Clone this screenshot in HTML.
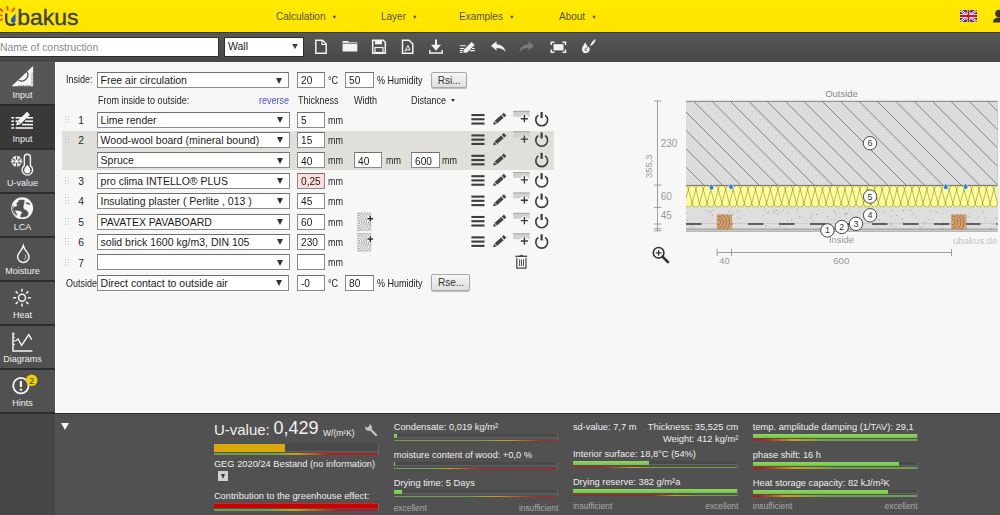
<!DOCTYPE html>
<html><head><meta charset="utf-8">
<style>
*{box-sizing:border-box;margin:0;padding:0}
html,body{width:1000px;height:515px;overflow:hidden;background:#f7f7f7;font-family:"Liberation Sans",sans-serif;color:#333}
.a{position:absolute}
#hdr{left:0;top:0;width:1000px;height:32px;background:linear-gradient(#ffea00,#ffe400)}
#tb{left:0;top:32px;width:1000px;height:29.8px;background:linear-gradient(#575757,#474747);border-top:1px solid #3a3a3a}
.menu{top:11px;font-size:10px;color:#5a5230}
.menu i{font-style:normal;font-size:5.5px;margin-left:6px;position:relative;top:-1.5px}
#side{left:0;top:62px;width:55px;height:352px;background:#4a4a4a}
.tab{left:0;width:55px;height:44px;border-bottom:1px solid #2f2f2f;background:#4b4b4b}
.tab span{position:absolute;left:0;width:55px;text-align:center;font-size:10px;color:#eee;top:30px}
#bot{left:0;top:413px;width:1000px;height:102px;background:#515151;border-top:1px solid #2e2e2e}
.sel{background:#fff;border:1px solid #8d8d8d;height:16px;font-size:10.5px;line-height:14px;padding-left:3px;color:#222;white-space:nowrap;overflow:hidden}
.sel:after{content:"";position:absolute;right:6px;top:5px;border-left:3px solid transparent;border-right:3px solid transparent;border-top:6px solid #333}
.inp{background:#fff;border:1px solid #8d8d8d;height:16px;font-size:10.5px;line-height:14px;padding-left:3px;color:#222}
.lbl{font-size:9px;color:#333;white-space:nowrap}
.bt{font-size:9.3px;color:#eee;white-space:nowrap}
.selb{background:#fff;border:1px solid #8a8a8a;border-top-color:#6f6f6f;height:16px}
.inpb{border:1px solid #8a8a8a;border-top-color:#6f6f6f;height:16px}
.tri{width:0;height:0;border-left:3.5px solid transparent;border-right:3.5px solid transparent;border-top:6px solid #333}
.btn{border:1px solid #a8a8a8;border-radius:2px;background:linear-gradient(#f6f6f6,#dedede);box-shadow:0 1px 1px rgba(0,0,0,.25)}
.grip{width:5px;height:8px;background-image:linear-gradient(90deg,#b8b8b8 1.4px,transparent 1.4px);background-size:2.9px 2.9px;-webkit-mask-image:linear-gradient(#000 1.4px,transparent 1.4px);-webkit-mask-size:2.9px 2.9px}
</style></head><body>
<div id="hdr" class="a"></div>
<div class="a menu" style="left:276px">Calculation<i>▼</i></div>
<div class="a menu" style="left:381px">Layer<i>▼</i></div>
<div class="a menu" style="left:459px">Examples<i>▼</i></div>
<div class="a menu" style="left:559px">About<i>▼</i></div>


<svg class="a" style="left:0;top:0" width="90" height="32" viewBox="0 0 90 32">
 <g stroke="#e5531c" stroke-width="1.9" stroke-linecap="round">
  <line x1="7.3" y1="6.6" x2="7.6" y2="9.8"/>
  <line x1="14.2" y1="8.4" x2="12.2" y2="11.2"/>
  <line x1="0.3" y1="8.9" x2="2.6" y2="11.2"/>
  <line x1="-0.5" y1="15.4" x2="1.8" y2="15.4"/>
  <line x1="-0.5" y1="20.5" x2="1.9" y2="19.3"/>
 </g>
 <path d="M6.2 13.2 V19.8 C6.2 23.3, 8.4 24.9, 11.2 24.9 C12.9 24.9, 14.3 24.4, 15.2 23.6" fill="none" stroke="#3c404d" stroke-width="2.3"/>
 <path d="M15.6 13.4 C14.2 15.6, 11 17.4, 11 20 A2.25 2.25 0 0 0 15.4 21.2 C15.9 19.2, 15.3 16, 15.6 13.4 Z" fill="#1763cf"/>
 <text x="17.3" y="25" font-family="Liberation Sans" font-size="22" fill="#3c404d" stroke="#3c404d" stroke-width="0.35" textLength="61.3" lengthAdjust="spacingAndGlyphs">bakus</text>
</svg>
<svg class="a" style="left:960px;top:10px" width="17" height="12" viewBox="0 0 60 40" preserveAspectRatio="none">
 <rect width="60" height="40" fill="#1d3a8a"/>
 <path d="M0,0 L60,40 M60,0 L0,40" stroke="#fff" stroke-width="8"/>
 <path d="M0,0 L60,40 M60,0 L0,40" stroke="#d0102a" stroke-width="3"/>
 <path d="M30,0 V40 M0,20 H60" stroke="#fff" stroke-width="12"/>
 <path d="M30,0 V40 M0,20 H60" stroke="#d0102a" stroke-width="7"/>
</svg>
<svg class="a" style="left:993px;top:9px" width="7" height="14" viewBox="0 0 7 14">
 <circle cx="6" cy="4.5" r="3.8" fill="#3b3520"/>
 <path d="M0 13.5 C0 9.5, 3 8.5, 6 8.5 L7 8.5 L7 13.5Z" fill="#3b3520"/>
</svg>
<div id="tb" class="a"></div>

<div class="a" style="left:-5px;top:36.8px;width:224px;height:20px;background:#fff;border:1px solid #2e2e2e;border-top-color:#333"></div>
<div class="a" style="left:0;top:41.8px;font-size:10.4px;color:#8a8a8a;white-space:nowrap">Name of construction</div>
<div class="a" style="left:224px;top:36.8px;width:80px;height:20px;background:#fff;border:1px solid #2e2e2e"></div>
<div class="a" style="left:228px;top:40.3px;font-size:10.5px;color:#222">Wall</div>
<div class="a" style="left:292px;top:44px;width:0;height:0;border-left:3.2px solid transparent;border-right:3.2px solid transparent;border-top:5.6px solid #444"></div>
<svg class="a" style="left:300px;top:36px" width="310" height="22" viewBox="300 36 310 22" fill="none" stroke="#f2f2f2">
 <!-- new doc -->
 <path d="M315.8 40.3 H322.5 L326.2 44 V53.2 H315.8 Z" stroke-width="1.5"/>
 <path d="M322 40.5 V44.5 H326" stroke-width="1.2"/>
 <!-- folder -->
 <path d="M342.6 41 H348 L349.3 42.3 H357.3 V51.4 H342.6 Z" fill="#f2f2f2" stroke="none"/>
 <path d="M342.6 43.3 H357.3" stroke="#4f4f4f" stroke-width="0.8"/>
 <!-- save -->
 <path d="M372.7 40.3 H383.3 L385.3 42.3 V53.2 H372.7 Z" stroke-width="1.5"/>
 <rect x="375" y="40.5" width="7" height="3.8" fill="#f2f2f2" stroke="none"/>
 <rect x="375" y="47.5" width="8" height="5" stroke-width="1.2"/>
 <!-- pdf -->
 <path d="M402.5 40.3 H409 L412.8 44 V53.2 H402.5 Z" stroke-width="1.5"/>
 <path d="M405 51 L408 45.5 L410 50 Q407 49 405 51" stroke-width="1"/>
 <!-- download -->
 <path d="M436 39.5 V49" stroke-width="2"/>
 <path d="M431.5 45 L436 50.5 L440.5 45 Z" fill="#f2f2f2" stroke-width="0.5"/>
 <path d="M429.8 50 V53 H442.2 V50" stroke-width="1.5"/>
 <!-- edit lines -->
 <path d="M459.9 45.8 H466 M459.9 48.5 H464.3 M459.9 50.6 H463.3 M459.9 52.5 H462 M472 48.5 H474.8 M470 50.6 H474.9" stroke="#f2f2f2" stroke-width="1.1" fill="none"/>
 <path d="M463.3 52.8 L464.2 49.4 L471.6 42 L474.6 45 L467.2 52.4 Z" fill="#f2f2f2" stroke="none"/>
 <!-- undo -->
 <path d="M491 45.8 L496.5 41.3 V44.2 C501 44.2, 504.5 47, 505.7 51.7 C503 49, 500 48, 496.5 48 V50.6 Z" fill="#f2f2f2" stroke="none"/>
 <!-- redo -->
 <path d="M534 45.8 L528.5 41.3 V44.2 C524 44.2, 520.5 47, 519.5 51.7 C522 49, 525 48, 528.5 48 V50.6 Z" fill="#7b7b7b" stroke="none"/>
 <!-- fullscreen -->
 <path d="M551.3 45 V42.3 H554.5 M562.5 42.3 H565.5 V45 M565.5 49.5 V52.3 H562.5 M554.5 52.3 H551.3 V49.5" stroke-width="1.5"/>
 <rect x="553.5" y="44.2" width="10" height="6.2" fill="#f2f2f2" stroke="none"/>
 <!-- brush -->
 <path d="M595.8 39 Q591.2 41 590.2 46.3 Q595 44 595.8 39 Z" fill="#f2f2f2" stroke="none"/>
 <path d="M585.4 42.3 C584.3 44.3, 582 46.2, 582 49.6 C582 52, 583.8 53.2, 585.8 53.2 C588 53.2, 589.6 51.6, 589.8 49.3 C589.8 47.8, 589 47, 588.2 46.8 C587 45.8, 586 44.5, 585.4 42.3 Z" fill="#f2f2f2" stroke="none"/>
 <path d="M587.6 47.2 L584.8 49.6 L587 51" stroke="#4f4f4f" stroke-width="1" fill="none"/>
</svg>
<div id="side" class="a"></div>
<div class="a" style="left:55px;top:62px;width:1px;height:351px;background:#fff"></div>
<div class="a" style="left:0;top:61.5px;width:55px;height:44px;background:#565656;border-bottom:2px solid #2c2c2c"></div>
<div class="a" style="left:0;top:90.0px;width:45px;text-align:center;font-size:9px;color:#f0f0f0">Input</div>
<div class="a" style="left:0;top:105.5px;width:55px;height:44px;background:#393939;border-bottom:2px solid #2c2c2c"></div>
<div class="a" style="left:0;top:134.0px;width:45px;text-align:center;font-size:9px;color:#f0f0f0">Input</div>
<div class="a" style="left:0;top:149.5px;width:55px;height:44px;background:#515151;border-bottom:2px solid #2c2c2c"></div>
<div class="a" style="left:0;top:178.0px;width:45px;text-align:center;font-size:9px;color:#f0f0f0">U-value</div>
<div class="a" style="left:0;top:193.5px;width:55px;height:44px;background:#515151;border-bottom:2px solid #2c2c2c"></div>
<div class="a" style="left:0;top:222.0px;width:45px;text-align:center;font-size:9px;color:#f0f0f0">LCA</div>
<div class="a" style="left:0;top:237.5px;width:55px;height:44px;background:#515151;border-bottom:2px solid #2c2c2c"></div>
<div class="a" style="left:0;top:266.0px;width:45px;text-align:center;font-size:9px;color:#f0f0f0">Moisture</div>
<div class="a" style="left:0;top:281.5px;width:55px;height:44px;background:#515151;border-bottom:2px solid #2c2c2c"></div>
<div class="a" style="left:0;top:310.0px;width:45px;text-align:center;font-size:9px;color:#f0f0f0">Heat</div>
<div class="a" style="left:0;top:325.5px;width:55px;height:44px;background:#515151;border-bottom:2px solid #2c2c2c"></div>
<div class="a" style="left:0;top:354.0px;width:45px;text-align:center;font-size:9px;color:#f0f0f0">Diagrams</div>
<div class="a" style="left:0;top:369.5px;width:55px;height:44px;background:#515151;border-bottom:2px solid #2c2c2c"></div>
<div class="a" style="left:0;top:398.0px;width:45px;text-align:center;font-size:9px;color:#f0f0f0">Hints</div>

<svg class="a" style="left:0;top:62px" width="55" height="352" viewBox="0 62 55 352">
 <!-- set square -->
 <path d="M11.5 86.3 L33.1 66 V86.3 Z" fill="#f4f4f4"/>
 <path d="M18.4 80 A6.2 6.2 0 0 0 27.1 71.8" stroke="#575757" stroke-width="1.3" fill="none"/>
 <path d="M19.1 85.1 V86.5 M21.2 85.1 V86.5 M23.4 85.1 V86.5 M25.6 85.1 V86.5 M27.7 85.1 V86.5 M29.9 85.1 V86.5 M31.4 73.6 H32.6 M31.4 75.7 H32.6 M31.4 77.8 H32.6 M31.4 79.9 H32.6 M31.4 82 H32.6 M31.4 84 H32.6" stroke="#575757" stroke-width="0.8"/>
 <!-- input form -->
 <g fill="#f4f4f4">
  <rect x="11.4" y="117" width="2.6" height="1.6"/><rect x="15.5" y="117" width="7" height="1.6"/><rect x="27" y="117" width="6" height="1.6"/>
  <rect x="11.4" y="120.4" width="2.6" height="1.6"/><rect x="15.5" y="120.4" width="2.5" height="1.6"/><rect x="25" y="120.4" width="8" height="1.6"/>
  <rect x="11.4" y="123.8" width="2.6" height="1.6"/><rect x="22" y="123.8" width="11" height="1.6"/>
  <rect x="11.4" y="127.2" width="2.6" height="1.6"/><rect x="15.5" y="127.2" width="17.5" height="1.6"/>
  <path d="M16 125.5 L17.3 121.2 L27 111.8 L30 114.8 L20.3 124.2 Z"/>
 </g>
 <path d="M18.3 121.6 L19.9 123.2" stroke="#3a3a3a" stroke-width="0.9"/>
 <!-- thermometer -->
 <path d="M24.3 157.3 A3.05 3.05 0 0 1 30.4 157.3 V165.6 A5.25 5.25 0 1 1 24.3 165.6 Z" fill="none" stroke="#f4f4f4" stroke-width="1.4"/>
 <path d="M27.3 164.6 C26.8 166.5, 24.2 167.6, 24.2 170.2 A3.1 3.1 0 0 0 30.4 170.2 C30.4 167.6, 27.8 166.5, 27.3 164.6 Z" fill="#f4f4f4"/>
 <path d="M16.60 161.20 L22.00 161.20 M19.57 161.20 L21.27 159.50 M19.57 161.20 L21.27 162.90 M16.60 161.20 L19.30 165.88 M18.09 163.77 L20.40 164.39 M18.09 163.77 L17.46 166.09 M16.60 161.20 L13.90 165.88 M15.12 163.77 L15.74 166.09 M15.12 163.77 L12.80 164.39 M16.60 161.20 L11.20 161.20 M13.63 161.20 L11.93 162.90 M13.63 161.20 L11.93 159.50 M16.60 161.20 L13.90 156.52 M15.12 158.63 L12.80 158.01 M15.12 158.63 L15.74 156.31 M16.60 161.20 L19.30 156.52 M18.09 158.63 L17.46 156.31 M18.09 158.63 L20.40 158.01 " stroke="#f4f4f4" stroke-width="1.1" stroke-linecap="round" fill="none"/>
 <!-- globe -->
 <circle cx="22.2" cy="208.2" r="10.9" fill="#f4f4f4"/>
 <path d="M18.85 200.30 L24.15 200.05 L24.15 201.57 L23.65 205.10 L22.89 207.12 L24.15 209.65 L26.17 210.15 L27.69 212.17 L28.19 214.19 L26.68 216.21 L21.63 217.22 L20.62 216.72 L21.12 214.19 L22.64 212.68 L20.11 210.66 L16.58 210.15 L14.56 210.15 L15.57 212.17 L17.08 215.20 L15.06 213.18 L13.29 210.15 L13.55 207.63 L16.07 206.62 L17.59 205.61 L16.58 203.59 L18.60 202.07 Z" fill="#515151" stroke="#515151" stroke-width="0.6" stroke-linejoin="round"/>
 <path d="M25.16 202.58 L28.19 202.58 L30.72 204.34 L29.20 204.85 L26.68 204.09 Z" fill="#515151"/>
 <path d="M13.2 205.5 A9.4 9.4 0 0 0 16 215.5" fill="none" stroke="#515151" stroke-width="0.9"/>
 <!-- drop -->
 <path d="M23.3 245.8 C22 250.5, 17.6 253, 17.6 256.7 A5.7 5.7 0 0 0 29 256.7 C29 253, 24.6 250.5, 23.3 245.8 Z" fill="none" stroke="#f4f4f4" stroke-width="1.5"/>
 <path d="M25 254.5 C26.3 256.5, 26 258.5, 24 259.8" fill="none" stroke="#f4f4f4" stroke-width="0.7"/>
 <!-- sun -->
 <circle cx="22" cy="297.7" r="3.5" fill="none" stroke="#f4f4f4" stroke-width="1.5"/>
 <g stroke="#f4f4f4" stroke-width="1.5">
  <path d="M22 288.8 V291.8 M22 303.6 V306.6 M13.1 297.7 H16.1 M27.9 297.7 H30.9 M15.7 291.4 L17.8 293.5 M26.2 301.9 L28.3 304 M28.3 291.4 L26.2 293.5 M17.8 301.9 L15.7 304"/>
 </g>
 <!-- chart -->
 <path d="M13 332.5 V350.9 H32.4" fill="none" stroke="#f4f4f4" stroke-width="1.5"/>
 <path d="M13 334 H15 M13 337.5 H15 M13 341 H15 M13 344.6 H15" stroke="#f4f4f4" stroke-width="0.9"/>
 <path d="M15.2 341 L18 339 L21.6 345.4 L28.8 334.6 L31.7 339.6" fill="none" stroke="#f4f4f4" stroke-width="1.4"/>
 <!-- hints -->
 <circle cx="20.9" cy="385.6" r="7.7" fill="none" stroke="#f4f4f4" stroke-width="1.8"/>
 <path d="M20.9 381 V387" stroke="#f4f4f4" stroke-width="2.2"/>
 <circle cx="20.9" cy="389.6" r="1.2" fill="#f4f4f4"/>
 <circle cx="31.7" cy="380.3" r="5.8" fill="#f2cf00"/>
 <text x="31.7" y="383.7" font-family="Liberation Sans" font-size="9" fill="#3a3a3a" text-anchor="middle">2</text>
</svg>

<!--FORM-->
<div class="a" style="left:61.5px;top:130.8px;width:492.5px;height:39px;background:#e0dfd9"></div>
<div class="a" style="left:65.6px;top:74.42px;font-size:10.2px;color:#1e1e1e;white-space:nowrap;transform:scaleX(0.885);transform-origin:0 0;">Inside:</div>
<div class="a selb" style="left:97.3px;top:72.20px;width:191.5px"></div>
<div class="a" style="left:100.6px;top:74.24px;font-size:10.5px;color:#1a1a1a;white-space:nowrap;transform:scaleX(1.0);transform-origin:0 0;">Free air circulation</div>
<div class="a tri" style="left:276.3px;top:77.50px"></div>
<div class="a inpb" style="left:297px;top:72.20px;width:28px;background:#fff"></div>
<div class="a" style="left:300.6px;top:74.48px;font-size:11px;color:#1a1a1a;white-space:nowrap;transform:scaleX(0.92);transform-origin:0 0;">20</div>
<div class="a" style="left:328px;top:74.62px;font-size:10.2px;color:#1e1e1e;white-space:nowrap;transform:scaleX(0.885);transform-origin:0 0;">°C</div>
<div class="a inpb" style="left:345.3px;top:72.20px;width:28.7px;background:#fff"></div>
<div class="a" style="left:348.90000000000003px;top:74.48px;font-size:11px;color:#1a1a1a;white-space:nowrap;transform:scaleX(0.92);transform-origin:0 0;">50</div>
<div class="a" style="left:377.2px;top:74.62px;font-size:10.2px;color:#1e1e1e;white-space:nowrap;transform:scaleX(0.885);transform-origin:0 0;">% Humidity</div>
<div class="a btn" style="left:431.3px;top:72.2px;width:35.4px;height:15.9px"></div>
<div class="a" style="left:437.7px;top:74.70px;font-size:10px;color:#333;white-space:nowrap;">Rsi...</div>
<div class="a" style="left:97.5px;top:94.62px;font-size:10.2px;color:#1e1e1e;white-space:nowrap;transform:scaleX(0.885);transform-origin:0 0;">From inside to outside:</div>
<div class="a" style="left:259.2px;top:94.62px;font-size:10.2px;color:#4b50d8;white-space:nowrap;transform:scaleX(0.885);transform-origin:0 0;">reverse</div>
<div class="a" style="left:297.8px;top:94.62px;font-size:10.2px;color:#1e1e1e;white-space:nowrap;transform:scaleX(0.885);transform-origin:0 0;">Thickness</div>
<div class="a" style="left:354px;top:94.62px;font-size:10.2px;color:#1e1e1e;white-space:nowrap;transform:scaleX(0.885);transform-origin:0 0;">Width</div>
<div class="a" style="left:411.3px;top:94.62px;font-size:10.2px;color:#1e1e1e;white-space:nowrap;transform:scaleX(0.885);transform-origin:0 0;">Distance</div>
<div class="a" style="left:451.4px;top:99px;width:0;height:0;border-left:2px solid transparent;border-right:2px solid transparent;border-top:3px solid #333"></div>
<div class="a grip" style="left:65px;top:115.90px"></div>
<div class="a" style="left:78.2px;top:114.82px;font-size:10.3px;color:#2a2a2a;white-space:nowrap;">1</div>
<div class="a selb" style="left:97.3px;top:111.60px;width:192.3px"></div>
<div class="a" style="left:100.6px;top:113.64px;font-size:10.5px;color:#1a1a1a;white-space:nowrap;transform:scaleX(1.0);transform-origin:0 0;">Lime render</div>
<div class="a tri" style="left:277.1px;top:116.90px"></div>
<div class="a inpb" style="left:297px;top:111.60px;width:28px;background:#fff"></div>
<div class="a" style="left:300.6px;top:113.88px;font-size:11px;color:#1a1a1a;white-space:nowrap;transform:scaleX(0.92);transform-origin:0 0;">5</div>
<div class="a" style="left:328px;top:114.62px;font-size:10.2px;color:#1e1e1e;white-space:nowrap;transform:scaleX(0.885);transform-origin:0 0;">mm</div>
<div class="a grip" style="left:65px;top:136.29px"></div>
<div class="a" style="left:78.2px;top:135.21px;font-size:10.3px;color:#2a2a2a;white-space:nowrap;">2</div>
<div class="a selb" style="left:97.3px;top:131.99px;width:192.3px"></div>
<div class="a" style="left:100.6px;top:134.03px;font-size:10.5px;color:#1a1a1a;white-space:nowrap;transform:scaleX(1.0);transform-origin:0 0;">Wood-wool board (mineral bound)</div>
<div class="a tri" style="left:277.1px;top:137.29px"></div>
<div class="a inpb" style="left:297px;top:131.99px;width:28px;background:#fff"></div>
<div class="a" style="left:300.6px;top:134.27px;font-size:11px;color:#1a1a1a;white-space:nowrap;transform:scaleX(0.92);transform-origin:0 0;">15</div>
<div class="a" style="left:328px;top:135.01px;font-size:10.2px;color:#1e1e1e;white-space:nowrap;transform:scaleX(0.885);transform-origin:0 0;">mm</div>
<div class="a selb" style="left:97.3px;top:152.38px;width:192.3px"></div>
<div class="a" style="left:100.6px;top:154.42px;font-size:10.5px;color:#1a1a1a;white-space:nowrap;transform:scaleX(1.0);transform-origin:0 0;">Spruce</div>
<div class="a tri" style="left:277.1px;top:157.68px"></div>
<div class="a inpb" style="left:297px;top:152.38px;width:28px;background:#fff"></div>
<div class="a" style="left:300.6px;top:154.66px;font-size:11px;color:#1a1a1a;white-space:nowrap;transform:scaleX(0.92);transform-origin:0 0;">40</div>
<div class="a" style="left:328px;top:155.40px;font-size:10.2px;color:#1e1e1e;white-space:nowrap;transform:scaleX(0.885);transform-origin:0 0;">mm</div>
<div class="a inpb" style="left:354px;top:152.38px;width:28px;background:#fff"></div>
<div class="a" style="left:357.6px;top:154.66px;font-size:11px;color:#1a1a1a;white-space:nowrap;transform:scaleX(0.92);transform-origin:0 0;">40</div>
<div class="a" style="left:385.5px;top:155.40px;font-size:10.2px;color:#1e1e1e;white-space:nowrap;transform:scaleX(0.885);transform-origin:0 0;">mm</div>
<div class="a inpb" style="left:411px;top:152.38px;width:28.5px;background:#fff"></div>
<div class="a" style="left:414.6px;top:154.66px;font-size:11px;color:#1a1a1a;white-space:nowrap;transform:scaleX(0.92);transform-origin:0 0;">600</div>
<div class="a" style="left:442px;top:155.40px;font-size:10.2px;color:#1e1e1e;white-space:nowrap;transform:scaleX(0.885);transform-origin:0 0;">mm</div>
<div class="a grip" style="left:65px;top:177.07px"></div>
<div class="a" style="left:78.2px;top:175.99px;font-size:10.3px;color:#2a2a2a;white-space:nowrap;">3</div>
<div class="a selb" style="left:97.3px;top:172.77px;width:192.3px"></div>
<div class="a" style="left:100.6px;top:174.81px;font-size:10.5px;color:#1a1a1a;white-space:nowrap;transform:scaleX(1.0);transform-origin:0 0;">pro clima INTELLO® PLUS</div>
<div class="a tri" style="left:277.1px;top:178.07px"></div>
<div class="a inpb" style="left:297px;top:172.77px;width:28px;background:#ffdede"></div>
<div class="a" style="left:300.6px;top:175.05px;font-size:11px;color:#1a1a1a;white-space:nowrap;transform:scaleX(0.92);transform-origin:0 0;">0,25</div>
<div class="a" style="left:328px;top:175.79px;font-size:10.2px;color:#1e1e1e;white-space:nowrap;transform:scaleX(0.885);transform-origin:0 0;">mm</div>
<div class="a grip" style="left:65px;top:197.46px"></div>
<div class="a" style="left:78.2px;top:196.38px;font-size:10.3px;color:#2a2a2a;white-space:nowrap;">4</div>
<div class="a selb" style="left:97.3px;top:193.16px;width:192.3px"></div>
<div class="a" style="left:100.6px;top:195.20px;font-size:10.5px;color:#1a1a1a;white-space:nowrap;transform:scaleX(1.0);transform-origin:0 0;">Insulating plaster ( Perlite , 013 )</div>
<div class="a tri" style="left:277.1px;top:198.46px"></div>
<div class="a inpb" style="left:297px;top:193.16px;width:28px;background:#fff"></div>
<div class="a" style="left:300.6px;top:195.44px;font-size:11px;color:#1a1a1a;white-space:nowrap;transform:scaleX(0.92);transform-origin:0 0;">45</div>
<div class="a" style="left:328px;top:196.18px;font-size:10.2px;color:#1e1e1e;white-space:nowrap;transform:scaleX(0.885);transform-origin:0 0;">mm</div>
<div class="a grip" style="left:65px;top:217.85px"></div>
<div class="a" style="left:78.2px;top:216.77px;font-size:10.3px;color:#2a2a2a;white-space:nowrap;">5</div>
<div class="a selb" style="left:97.3px;top:213.55px;width:192.3px"></div>
<div class="a" style="left:100.6px;top:215.59px;font-size:10.5px;color:#1a1a1a;white-space:nowrap;transform:scaleX(1.0);transform-origin:0 0;">PAVATEX PAVABOARD</div>
<div class="a tri" style="left:277.1px;top:218.85px"></div>
<div class="a inpb" style="left:297px;top:213.55px;width:28px;background:#fff"></div>
<div class="a" style="left:300.6px;top:215.83px;font-size:11px;color:#1a1a1a;white-space:nowrap;transform:scaleX(0.92);transform-origin:0 0;">60</div>
<div class="a" style="left:328px;top:216.57px;font-size:10.2px;color:#1e1e1e;white-space:nowrap;transform:scaleX(0.885);transform-origin:0 0;">mm</div>
<div class="a grip" style="left:65px;top:238.24px"></div>
<div class="a" style="left:78.2px;top:237.16px;font-size:10.3px;color:#2a2a2a;white-space:nowrap;">6</div>
<div class="a selb" style="left:97.3px;top:233.94px;width:192.3px"></div>
<div class="a" style="left:100.6px;top:235.98px;font-size:10.5px;color:#1a1a1a;white-space:nowrap;transform:scaleX(1.0);transform-origin:0 0;">solid brick 1600 kg/m3, DIN 105</div>
<div class="a tri" style="left:277.1px;top:239.24px"></div>
<div class="a inpb" style="left:297px;top:233.94px;width:28px;background:#fff"></div>
<div class="a" style="left:300.6px;top:236.22px;font-size:11px;color:#1a1a1a;white-space:nowrap;transform:scaleX(0.92);transform-origin:0 0;">230</div>
<div class="a" style="left:328px;top:236.96px;font-size:10.2px;color:#1e1e1e;white-space:nowrap;transform:scaleX(0.885);transform-origin:0 0;">mm</div>
<div class="a grip" style="left:65px;top:258.63px"></div>
<div class="a" style="left:78.2px;top:257.55px;font-size:10.3px;color:#2a2a2a;white-space:nowrap;">7</div>
<div class="a selb" style="left:97.3px;top:254.33px;width:192.3px"></div>
<div class="a" style="left:100.6px;top:256.37px;font-size:10.5px;color:#1a1a1a;white-space:nowrap;transform:scaleX(1.0);transform-origin:0 0;"></div>
<div class="a tri" style="left:277.1px;top:259.63px"></div>
<div class="a inpb" style="left:297px;top:254.33px;width:28px;background:#fff"></div>
<div class="a" style="left:328px;top:257.35px;font-size:10.2px;color:#1e1e1e;white-space:nowrap;transform:scaleX(0.885);transform-origin:0 0;">mm</div>
<div class="a" style="left:65.7px;top:277.54px;font-size:10.2px;color:#1e1e1e;white-space:nowrap;transform:scaleX(0.885);transform-origin:0 0;">Outside</div>
<div class="a selb" style="left:97.3px;top:274.72px;width:191.5px"></div>
<div class="a" style="left:100.6px;top:276.76px;font-size:10.5px;color:#1a1a1a;white-space:nowrap;transform:scaleX(1.0);transform-origin:0 0;">Direct contact to outside air</div>
<div class="a tri" style="left:276.3px;top:280.02px"></div>
<div class="a inpb" style="left:297px;top:274.72px;width:28px;background:#fff"></div>
<div class="a" style="left:300.6px;top:277.00px;font-size:11px;color:#1a1a1a;white-space:nowrap;transform:scaleX(0.92);transform-origin:0 0;">-0</div>
<div class="a" style="left:328px;top:277.74px;font-size:10.2px;color:#1e1e1e;white-space:nowrap;transform:scaleX(0.885);transform-origin:0 0;">°C</div>
<div class="a inpb" style="left:345.3px;top:274.72px;width:28.7px;background:#fff"></div>
<div class="a" style="left:348.90000000000003px;top:277.00px;font-size:11px;color:#1a1a1a;white-space:nowrap;transform:scaleX(0.92);transform-origin:0 0;">80</div>
<div class="a" style="left:377.2px;top:277.94px;font-size:10.2px;color:#1e1e1e;white-space:nowrap;transform:scaleX(0.885);transform-origin:0 0;">% Humidity</div>
<div class="a btn" style="left:431.3px;top:274.32px;width:38.4px;height:17px"></div>
<div class="a" style="left:438px;top:277.42px;font-size:10px;color:#333;white-space:nowrap;">Rse...</div>
<svg class="a" style="left:0;top:0" width="1000" height="515" viewBox="0 0 1000 515">
<defs>
 <g id="ham" fill="#3d3d3d"><rect x="471.4" y="2.4" width="13.1" height="2.1"/><rect x="471.4" y="6.6" width="13.1" height="2.1"/><rect x="471.4" y="10.9" width="13.1" height="2.1"/></g>
 <g id="pen"><path d="M493.00 13.20 L494.16 9.69 L496.62 12.46 Z" fill="#444"/><path d="M495.91 10.61 L502.41 4.83 M503.08 4.24 L505.10 2.44" stroke="#444" stroke-width="3.7"/></g>
 <mask id="pm" maskUnits="userSpaceOnUse" x="505" y="-5" width="30" height="20"><rect x="505" y="-5" width="30" height="20" fill="#fff"/><circle cx="524.4" cy="7.2" r="4.4" fill="#000"/></mask>
 <g id="plus"><g mask="url(#pm)"><rect x="513.1" y="-0.7" width="16.5" height="5.9" fill="#d0d0d0"/><rect x="513.1" y="-0.7" width="16.5" height="1" fill="#a8a8a8"/></g><path d="M524.4 3.4 V10.7 M520.8 7.1 H527.9" stroke="#3a3a3a" stroke-width="1.4"/></g>
 <g id="pwr" fill="none" stroke="#3a3a3a" stroke-width="1.6"><path d="M538.3 3.5 A5.9 5.9 0 1 0 545.1 3.5"/><path d="M541.6 0.4 V6.5" stroke-width="2.2"/></g>
  <clipPath id="tc"><rect x="357.5" y="-0.6" width="13.4" height="17.8"/></clipPath>
 <g id="tex"><rect x="357.5" y="-0.6" width="13.4" height="17.8" fill="#f2f2f2" stroke="#c4c4c4" stroke-width="0.6"/><g clip-path="url(#tc)"><path d="M357.6 6.1 A2.2 2.2 0 0 1 357.6 10.5 M357.6 3.9 A4.4 4.4 0 0 1 357.6 12.7 M357.6 1.7 A6.6 6.6 0 0 1 357.6 14.9 M357.6 -0.5 A8.8 8.8 0 0 1 357.6 17.1 M357.6 -2.7 A11 11 0 0 1 357.6 19.3 M357.6 -4.9 A13.2 13.2 0 0 1 357.6 21.5 M357.6 -7.1 A15.4 15.4 0 0 1 357.6 23.7 " fill="none" stroke="#8c8c8c" stroke-width="0.75"/></g><circle cx="370.3" cy="5.1" r="3.2" fill="#f7f7f7"/><path d="M370.3 2.3 V8 M367.5 5.1 H373.1" stroke="#333" stroke-width="1.5"/></g>
 <g id="trash"><rect x="515.4" y="1.3" width="11.7" height="1.3" fill="#3a3a3a"/><path d="M519.4 1.4 Q521.5 -0.4 523.6 1.4 Z" fill="#3a3a3a"/><path d="M516.8 3.6 V13.8 H526 V3.6" fill="none" stroke="#444" stroke-width="1.2"/><path d="M519.6 5 V11.7 M521.5 5 V11.7 M523.5 5 V11.7" stroke="#444" stroke-width="0.95"/></g>
</defs>
<use href="#ham" x="0" y="111.60"/><use href="#pen" x="0" y="111.60"/><use href="#pwr" x="0" y="111.60"/><use href="#plus" x="0" y="111.60"/><use href="#ham" x="0" y="131.99"/><use href="#pen" x="0" y="131.99"/><use href="#pwr" x="0" y="131.99"/><use href="#plus" x="0" y="131.99"/><use href="#ham" x="0" y="152.38"/><use href="#pen" x="0" y="152.38"/><use href="#pwr" x="0" y="152.38"/><use href="#ham" x="0" y="172.77"/><use href="#pen" x="0" y="172.77"/><use href="#pwr" x="0" y="172.77"/><use href="#plus" x="0" y="172.77"/><use href="#ham" x="0" y="193.16"/><use href="#pen" x="0" y="193.16"/><use href="#pwr" x="0" y="193.16"/><use href="#plus" x="0" y="193.16"/><use href="#ham" x="0" y="213.55"/><use href="#pen" x="0" y="213.55"/><use href="#pwr" x="0" y="213.55"/><use href="#plus" x="0" y="213.55"/><use href="#tex" x="0" y="213.55"/><use href="#ham" x="0" y="233.94"/><use href="#pen" x="0" y="233.94"/><use href="#pwr" x="0" y="233.94"/><use href="#plus" x="0" y="233.94"/><use href="#tex" x="0" y="233.94"/><use href="#trash" x="0" y="254.33"/></svg>
<!--/FORM-->
<!--DIAG-->
<svg class="a" style="left:0;top:0" width="1000" height="515" viewBox="0 0 1000 515" font-family="Liberation Sans">
<defs><clipPath id="cb"><rect x="686" y="101" width="311.5" height="84"/></clipPath><clipPath id="ci"><rect x="686" y="185" width="311.5" height="22.4"/></clipPath><clipPath id="cp"><rect x="686" y="207.4" width="311.5" height="24.2"/></clipPath><clipPath id="bt717"><rect x="717.1" y="214.8" width="14.6" height="14.6"/></clipPath><clipPath id="bt951"><rect x="951.5" y="214.8" width="14.6" height="14.6"/></clipPath></defs>
<text x="841.5" y="97" font-size="9.45" fill="#888" text-anchor="middle">Outside</text>
<rect x="686" y="101" width="311.5" height="84" fill="#dcdcdc"/>
<g clip-path="url(#cb)"><path d="M583.15 101 L667.15 185 M601.52 101 L685.52 185 M619.89 101 L703.89 185 M638.26 101 L722.26 185 M656.63 101 L740.63 185 M675.00 101 L759.00 185 M693.37 101 L777.37 185 M711.74 101 L795.74 185 M730.11 101 L814.11 185 M748.48 101 L832.48 185 M766.85 101 L850.85 185 M785.22 101 L869.22 185 M803.59 101 L887.59 185 M821.96 101 L905.96 185 M840.33 101 L924.33 185 M858.70 101 L942.70 185 M877.07 101 L961.07 185 M895.44 101 L979.44 185 M913.81 101 L997.81 185 M932.18 101 L1016.18 185 M950.55 101 L1034.55 185 M968.92 101 L1052.92 185 M987.29 101 L1071.29 185 " stroke="#666" stroke-width="0.75" fill="none"/></g>
<path d="M686 101.3 H997.5" stroke="#777" stroke-width="0.9"/>
<path d="M997.5 101 V231.6" stroke="#bbb" stroke-width="0.6"/>
<rect x="686" y="185" width="311.5" height="22.599999999999994" fill="#ffff96"/>
<g clip-path="url(#ci)"><path d="M666.08 189.32 A3.72 3.72 0 0 1 673.52 189.32 L669.80 203.28 A3.72 3.72 0 0 0 677.24 203.28 L673.53 189.32 A3.72 3.72 0 0 1 680.97 189.32 L677.25 203.28 A3.72 3.72 0 0 0 684.69 203.28 L680.98 189.32 A3.72 3.72 0 0 1 688.42 189.32 L684.70 203.28 A3.72 3.72 0 0 0 692.14 203.28 L688.43 189.32 A3.72 3.72 0 0 1 695.87 189.32 L692.15 203.28 A3.72 3.72 0 0 0 699.59 203.28 L695.88 189.32 A3.72 3.72 0 0 1 703.32 189.32 L699.60 203.28 A3.72 3.72 0 0 0 707.04 203.28 L703.33 189.32 A3.72 3.72 0 0 1 710.77 189.32 L707.05 203.28 A3.72 3.72 0 0 0 714.49 203.28 L710.78 189.32 A3.72 3.72 0 0 1 718.22 189.32 L714.50 203.28 A3.72 3.72 0 0 0 721.94 203.28 L718.23 189.32 A3.72 3.72 0 0 1 725.67 189.32 L721.95 203.28 A3.72 3.72 0 0 0 729.39 203.28 L725.68 189.32 A3.72 3.72 0 0 1 733.12 189.32 L729.40 203.28 A3.72 3.72 0 0 0 736.84 203.28 L733.13 189.32 A3.72 3.72 0 0 1 740.57 189.32 L736.85 203.28 A3.72 3.72 0 0 0 744.29 203.28 L740.58 189.32 A3.72 3.72 0 0 1 748.02 189.32 L744.30 203.28 A3.72 3.72 0 0 0 751.74 203.28 L748.03 189.32 A3.72 3.72 0 0 1 755.47 189.32 L751.75 203.28 A3.72 3.72 0 0 0 759.19 203.28 L755.48 189.32 A3.72 3.72 0 0 1 762.92 189.32 L759.20 203.28 A3.72 3.72 0 0 0 766.64 203.28 L762.93 189.32 A3.72 3.72 0 0 1 770.37 189.32 L766.65 203.28 A3.72 3.72 0 0 0 774.09 203.28 L770.38 189.32 A3.72 3.72 0 0 1 777.82 189.32 L774.10 203.28 A3.72 3.72 0 0 0 781.54 203.28 L777.83 189.32 A3.72 3.72 0 0 1 785.27 189.32 L781.55 203.28 A3.72 3.72 0 0 0 788.99 203.28 L785.28 189.32 A3.72 3.72 0 0 1 792.72 189.32 L789.00 203.28 A3.72 3.72 0 0 0 796.44 203.28 L792.73 189.32 A3.72 3.72 0 0 1 800.17 189.32 L796.45 203.28 A3.72 3.72 0 0 0 803.89 203.28 L800.18 189.32 A3.72 3.72 0 0 1 807.62 189.32 L803.90 203.28 A3.72 3.72 0 0 0 811.34 203.28 L807.63 189.32 A3.72 3.72 0 0 1 815.07 189.32 L811.35 203.28 A3.72 3.72 0 0 0 818.79 203.28 L815.08 189.32 A3.72 3.72 0 0 1 822.52 189.32 L818.80 203.28 A3.72 3.72 0 0 0 826.24 203.28 L822.53 189.32 A3.72 3.72 0 0 1 829.97 189.32 L826.25 203.28 A3.72 3.72 0 0 0 833.69 203.28 L829.98 189.32 A3.72 3.72 0 0 1 837.42 189.32 L833.70 203.28 A3.72 3.72 0 0 0 841.14 203.28 L837.43 189.32 A3.72 3.72 0 0 1 844.87 189.32 L841.15 203.28 A3.72 3.72 0 0 0 848.59 203.28 L844.88 189.32 A3.72 3.72 0 0 1 852.32 189.32 L848.60 203.28 A3.72 3.72 0 0 0 856.04 203.28 L852.33 189.32 A3.72 3.72 0 0 1 859.77 189.32 L856.05 203.28 A3.72 3.72 0 0 0 863.49 203.28 L859.78 189.32 A3.72 3.72 0 0 1 867.22 189.32 L863.50 203.28 A3.72 3.72 0 0 0 870.94 203.28 L867.23 189.32 A3.72 3.72 0 0 1 874.67 189.32 L870.95 203.28 A3.72 3.72 0 0 0 878.39 203.28 L874.68 189.32 A3.72 3.72 0 0 1 882.12 189.32 L878.40 203.28 A3.72 3.72 0 0 0 885.84 203.28 L882.13 189.32 A3.72 3.72 0 0 1 889.57 189.32 L885.85 203.28 A3.72 3.72 0 0 0 893.29 203.28 L889.58 189.32 A3.72 3.72 0 0 1 897.02 189.32 L893.30 203.28 A3.72 3.72 0 0 0 900.74 203.28 L897.03 189.32 A3.72 3.72 0 0 1 904.47 189.32 L900.75 203.28 A3.72 3.72 0 0 0 908.19 203.28 L904.48 189.32 A3.72 3.72 0 0 1 911.92 189.32 L908.20 203.28 A3.72 3.72 0 0 0 915.64 203.28 L911.93 189.32 A3.72 3.72 0 0 1 919.37 189.32 L915.65 203.28 A3.72 3.72 0 0 0 923.09 203.28 L919.38 189.32 A3.72 3.72 0 0 1 926.82 189.32 L923.10 203.28 A3.72 3.72 0 0 0 930.54 203.28 L926.83 189.32 A3.72 3.72 0 0 1 934.27 189.32 L930.55 203.28 A3.72 3.72 0 0 0 937.99 203.28 L934.28 189.32 A3.72 3.72 0 0 1 941.72 189.32 L938.00 203.28 A3.72 3.72 0 0 0 945.44 203.28 L941.73 189.32 A3.72 3.72 0 0 1 949.17 189.32 L945.45 203.28 A3.72 3.72 0 0 0 952.89 203.28 L949.18 189.32 A3.72 3.72 0 0 1 956.62 189.32 L952.90 203.28 A3.72 3.72 0 0 0 960.34 203.28 L956.63 189.32 A3.72 3.72 0 0 1 964.07 189.32 L960.35 203.28 A3.72 3.72 0 0 0 967.79 203.28 L964.08 189.32 A3.72 3.72 0 0 1 971.52 189.32 L967.80 203.28 A3.72 3.72 0 0 0 975.24 203.28 L971.53 189.32 A3.72 3.72 0 0 1 978.97 189.32 L975.25 203.28 A3.72 3.72 0 0 0 982.69 203.28 L978.98 189.32 A3.72 3.72 0 0 1 986.42 189.32 L982.70 203.28 A3.72 3.72 0 0 0 990.14 203.28 L986.43 189.32 A3.72 3.72 0 0 1 993.87 189.32 L990.15 203.28 A3.72 3.72 0 0 0 997.59 203.28 L993.88 189.32 A3.72 3.72 0 0 1 1001.32 189.32 L997.60 203.28 A3.72 3.72 0 0 0 1005.04 203.28 L1001.33 189.32 " stroke="#6d6d45" stroke-width="0.5" fill="none"/></g>
<path d="M686 185.4 H997.5" stroke="#666" stroke-width="0.9"/>
<path d="M686 207.6 H997.5" stroke="#aaa" stroke-width="0.6"/>
<rect x="686" y="207.4" width="311.5" height="24.2" fill="#dedede"/>
<g fill="#a0a0a0" clip-path="url(#cp)"><rect x="786.7" y="211.9" width="1.2" height="0.7"/><rect x="708.5" y="220.6" width="1" height="0.7"/><rect x="968.9" y="213.3" width="0.7" height="1"/><rect x="816.1" y="213.9" width="1.2" height="1"/><rect x="704.4" y="221.2" width="0.7" height="0.7"/><rect x="865.5" y="217.4" width="0.7" height="0.7"/><rect x="859.1" y="211.5" width="1" height="0.7"/><rect x="854.2" y="221.3" width="1.2" height="0.7"/><rect x="718.1" y="221.4" width="0.7" height="1"/><rect x="716.3" y="224.5" width="1.2" height="0.7"/><rect x="878.5" y="219.7" width="1.2" height="1"/><rect x="927.7" y="219.0" width="1" height="1"/><rect x="779.2" y="226.4" width="1.2" height="0.7"/><rect x="711.5" y="215.3" width="1" height="1"/><rect x="912.9" y="215.0" width="0.7" height="0.7"/><rect x="845.2" y="212.2" width="1" height="0.7"/><rect x="976.2" y="218.0" width="1.2" height="0.7"/><rect x="923.8" y="221.4" width="1" height="1"/><rect x="902.2" y="221.9" width="1.2" height="1"/><rect x="707.4" y="210.6" width="1" height="1"/><rect x="902.8" y="210.0" width="1.2" height="1"/><rect x="887.3" y="230.8" width="1" height="1"/><rect x="908.9" y="228.5" width="1" height="0.7"/><rect x="978.5" y="216.5" width="1.2" height="0.7"/><rect x="839.5" y="213.4" width="1" height="0.7"/><rect x="915.6" y="217.5" width="1" height="0.7"/><rect x="737.7" y="217.5" width="1" height="0.7"/><rect x="940.8" y="227.9" width="1" height="1"/><rect x="992.8" y="223.9" width="1" height="0.7"/><rect x="732.9" y="212.5" width="0.7" height="0.7"/><rect x="689.8" y="227.2" width="0.7" height="1"/><rect x="773.7" y="211.8" width="1.2" height="1"/><rect x="875.7" y="215.7" width="0.7" height="0.7"/><rect x="828.0" y="228.1" width="1.2" height="1"/><rect x="809.8" y="217.4" width="1" height="1"/><rect x="705.4" y="210.0" width="0.7" height="1"/><rect x="736.5" y="216.2" width="0.7" height="0.7"/><rect x="686.1" y="211.9" width="0.7" height="1"/><rect x="876.9" y="210.1" width="0.7" height="1"/><rect x="732.2" y="214.2" width="1" height="1"/><rect x="833.5" y="211.1" width="1" height="1"/><rect x="835.4" y="215.5" width="0.7" height="0.7"/><rect x="919.1" y="225.2" width="1" height="0.7"/><rect x="846.6" y="213.1" width="1.2" height="1"/><rect x="731.6" y="220.7" width="0.7" height="1"/><rect x="990.3" y="227.9" width="1.2" height="1"/><rect x="847.2" y="228.9" width="1" height="0.7"/><rect x="851.6" y="226.0" width="1" height="0.7"/><rect x="876.7" y="226.2" width="0.7" height="0.7"/><rect x="940.5" y="225.1" width="0.7" height="0.7"/><rect x="847.0" y="216.5" width="0.7" height="0.7"/><rect x="931.7" y="219.1" width="0.7" height="1"/><rect x="825.1" y="229.6" width="1" height="1"/><rect x="711.0" y="210.8" width="1" height="0.7"/><rect x="791.0" y="219.4" width="1.2" height="0.7"/><rect x="835.1" y="223.2" width="1.2" height="0.7"/><rect x="945.6" y="211.2" width="1" height="0.7"/><rect x="834.7" y="212.5" width="1.2" height="1"/><rect x="713.0" y="229.8" width="1.2" height="1"/><rect x="830.0" y="225.2" width="0.7" height="0.7"/><rect x="738.9" y="211.4" width="0.7" height="1"/><rect x="936.8" y="211.8" width="1.2" height="1"/><rect x="890.4" y="216.4" width="1.2" height="0.7"/><rect x="692.7" y="226.5" width="1.2" height="0.7"/><rect x="849.8" y="229.5" width="1" height="0.7"/><rect x="942.9" y="213.2" width="1" height="0.7"/><rect x="777.1" y="213.9" width="1.2" height="1"/><rect x="766.7" y="217.9" width="0.7" height="0.7"/><rect x="969.0" y="216.5" width="1" height="1"/><rect x="943.2" y="228.3" width="0.7" height="0.7"/><rect x="848.8" y="208.9" width="1" height="0.7"/><rect x="875.3" y="226.0" width="0.7" height="0.7"/><rect x="730.0" y="222.4" width="0.7" height="0.7"/><rect x="787.4" y="220.2" width="1.2" height="1"/><rect x="929.9" y="210.9" width="1.2" height="0.7"/><rect x="763.3" y="214.7" width="0.7" height="1"/><rect x="860.7" y="225.6" width="0.7" height="1"/><rect x="787.3" y="230.4" width="1.2" height="0.7"/><rect x="901.4" y="218.7" width="1.2" height="1"/><rect x="843.9" y="214.1" width="1.2" height="1"/><rect x="973.0" y="228.6" width="0.7" height="1"/><rect x="728.6" y="211.2" width="1" height="1"/><rect x="708.6" y="213.9" width="0.7" height="0.7"/><rect x="894.2" y="226.1" width="0.7" height="1"/><rect x="730.5" y="228.4" width="1" height="0.7"/><rect x="918.2" y="210.6" width="1" height="0.7"/><rect x="993.9" y="227.2" width="0.7" height="1"/><rect x="995.2" y="217.6" width="1" height="0.7"/><rect x="796.9" y="210.6" width="1" height="0.7"/><rect x="791.1" y="218.8" width="1.2" height="0.7"/><rect x="805.5" y="220.1" width="1" height="0.7"/><rect x="721.1" y="229.2" width="0.7" height="0.7"/><rect x="712.1" y="214.6" width="0.7" height="1"/><rect x="921.0" y="226.9" width="1.2" height="1"/><rect x="812.2" y="220.6" width="1.2" height="1"/><rect x="903.8" y="210.5" width="0.7" height="0.7"/><rect x="818.3" y="210.1" width="0.7" height="0.7"/><rect x="935.3" y="210.4" width="0.7" height="0.7"/><rect x="768.2" y="211.2" width="0.7" height="1"/><rect x="995.2" y="217.9" width="1" height="0.7"/><rect x="699.4" y="224.5" width="0.7" height="0.7"/><rect x="767.4" y="212.6" width="1" height="1"/><rect x="851.2" y="213.1" width="1" height="0.7"/><rect x="770.1" y="226.6" width="1" height="0.7"/><rect x="690.8" y="225.0" width="1.2" height="0.7"/><rect x="845.9" y="214.0" width="1" height="0.7"/><rect x="890.7" y="223.1" width="1.2" height="1"/><rect x="855.8" y="228.5" width="1.2" height="1"/><rect x="899.9" y="230.6" width="1" height="0.7"/><rect x="944.8" y="224.4" width="1.2" height="0.7"/><rect x="811.9" y="216.3" width="0.7" height="0.7"/><rect x="690.4" y="222.6" width="1" height="1"/><rect x="736.8" y="210.4" width="1" height="1"/><rect x="872.2" y="224.1" width="0.7" height="1"/><rect x="743.6" y="214.6" width="0.7" height="1"/><rect x="799.2" y="215.9" width="1.2" height="1"/><rect x="762.0" y="230.2" width="1" height="0.7"/><rect x="796.9" y="208.5" width="1" height="0.7"/><rect x="833.6" y="219.8" width="0.7" height="0.7"/><rect x="843.0" y="208.6" width="1" height="0.7"/><rect x="730.7" y="221.7" width="1" height="0.7"/><rect x="779.2" y="222.7" width="0.7" height="0.7"/><rect x="890.5" y="224.6" width="1.2" height="1"/><rect x="923.7" y="224.7" width="1" height="0.7"/><rect x="774.4" y="222.4" width="0.7" height="0.7"/><rect x="942.5" y="224.6" width="1.2" height="1"/><rect x="914.2" y="226.8" width="0.7" height="0.7"/><rect x="943.0" y="221.6" width="1.2" height="0.7"/><rect x="712.5" y="209.4" width="1.2" height="1"/><rect x="984.4" y="217.0" width="1" height="0.7"/><rect x="881.2" y="222.6" width="1.2" height="0.7"/><rect x="838.2" y="208.6" width="0.7" height="0.7"/><rect x="891.0" y="210.0" width="1.2" height="1"/><rect x="764.4" y="210.2" width="1" height="0.7"/><rect x="912.8" y="213.1" width="1.2" height="1"/><rect x="839.6" y="217.1" width="1" height="1"/><rect x="924.5" y="222.4" width="1.2" height="0.7"/><rect x="710.1" y="211.8" width="1" height="1"/><rect x="879.2" y="211.5" width="1" height="0.7"/><rect x="837.1" y="230.4" width="0.7" height="0.7"/><rect x="896.1" y="215.0" width="1.2" height="1"/><rect x="830.5" y="219.0" width="0.7" height="0.7"/><rect x="782.9" y="210.4" width="1" height="0.7"/><rect x="776.1" y="210.2" width="1.2" height="1"/><rect x="995.1" y="217.2" width="0.7" height="0.7"/><rect x="866.8" y="211.7" width="1.2" height="1"/><rect x="982.3" y="211.5" width="1.2" height="1"/><rect x="961.8" y="224.3" width="0.7" height="1"/><rect x="965.2" y="219.4" width="0.7" height="0.7"/><rect x="687.1" y="219.6" width="1" height="1"/><rect x="779.9" y="211.7" width="1" height="1"/><rect x="784.3" y="227.4" width="0.7" height="1"/><rect x="919.5" y="227.4" width="0.7" height="0.7"/><rect x="907.8" y="228.8" width="1" height="1"/><rect x="801.8" y="217.3" width="1.2" height="0.7"/><rect x="798.2" y="218.1" width="1" height="0.7"/><rect x="773.3" y="209.7" width="1.2" height="1"/><rect x="883.5" y="211.9" width="1" height="1"/><rect x="844.9" y="212.8" width="1" height="1"/><rect x="961.0" y="226.8" width="1.2" height="1"/><rect x="970.1" y="229.7" width="1.2" height="0.7"/><rect x="909.8" y="209.6" width="1.2" height="1"/><rect x="826.2" y="225.4" width="1.2" height="1"/><rect x="837.0" y="229.0" width="1.2" height="0.7"/><rect x="739.1" y="217.8" width="1" height="1"/><rect x="765.5" y="225.1" width="1.2" height="1"/><rect x="812.3" y="213.9" width="1" height="1"/><rect x="723.2" y="223.0" width="0.7" height="0.7"/><rect x="841.7" y="226.8" width="1.2" height="0.7"/><rect x="826.9" y="216.0" width="1" height="1"/></g>
<path d="M686 223.4 H997.5" stroke="#bdbdbd" stroke-width="0.6"/>
<path d="M686 229.2 H997.5" stroke="#7a7a7a" stroke-width="0.9"/>
<rect x="686" y="229.7" width="311.5" height="1.9" fill="#c9c9c9"/>
<path d="M686 231.5 H997.5" stroke="#999" stroke-width="0.5"/>
<path d="M686.0 224 H701.5 M717.0 224 H732.5 M748.0 224 H763.5 M779.0 224 H794.5 M810.0 224 H825.5 M841.0 224 H856.5 M872.0 224 H887.5 M903.0 224 H918.5 M934.0 224 H949.5 M965.0 224 H980.5 M996.0 224 H997.5 " stroke="#3a3a3a" stroke-width="1.35"/>
<rect x="717.1" y="214.8" width="14.6" height="14.6" fill="#d2a26f" stroke="#b88a5a" stroke-width="0.4"/>
<g clip-path="url(#bt717)"><path d="M717.6 219.1 A3 3 0 0 1 717.6 225.1 M717.6 216.1 A6 6 0 0 1 717.6 228.1 M717.6 213.1 A9 9 0 0 1 717.6 231.1 M717.6 210.1 A12 12 0 0 1 717.6 234.1 " fill="none" stroke="#9a6a3e" stroke-width="0.8"/></g>
<rect x="951.5" y="214.8" width="14.6" height="14.6" fill="#d2a26f" stroke="#b88a5a" stroke-width="0.4"/>
<g clip-path="url(#bt951)"><path d="M952.0 219.1 A3 3 0 0 1 952.0 225.1 M952.0 216.1 A6 6 0 0 1 952.0 228.1 M952.0 213.1 A9 9 0 0 1 952.0 231.1 M952.0 210.1 A12 12 0 0 1 952.0 234.1 " fill="none" stroke="#9a6a3e" stroke-width="0.8"/></g>
<path d="M711.5 183.7 C712.1 185.2, 713.8 186.2, 713.8 187.7 A2.3 2.3 0 0 1 709.2 187.7 C709.2 186.2, 710.9 185.2, 711.5 183.7 Z" fill="#2a7de6" stroke="#fff" stroke-width="0.6"/>
<path d="M731 183.1 C731.6 184.6, 733.3 185.6, 733.3 187.1 A2.3 2.3 0 0 1 728.7 187.1 C728.7 185.6, 730.4 184.6, 731 183.1 Z" fill="#2a7de6" stroke="#fff" stroke-width="0.6"/>
<path d="M945.8 183.29999999999998 C946.4 184.79999999999998, 948.0999999999999 185.79999999999998, 948.0999999999999 187.29999999999998 A2.3 2.3 0 0 1 943.5 187.29999999999998 C943.5 185.79999999999998, 945.1999999999999 184.79999999999998, 945.8 183.29999999999998 Z" fill="#2a7de6" stroke="#fff" stroke-width="0.6"/>
<path d="M965.6 183.1 C966.2 184.6, 967.9 185.6, 967.9 187.1 A2.3 2.3 0 0 1 963.3000000000001 187.1 C963.3000000000001 185.6, 965.0 184.6, 965.6 183.1 Z" fill="#2a7de6" stroke="#fff" stroke-width="0.6"/>
<circle cx="870" cy="143.2" r="6.7" fill="#fff" stroke="#333" stroke-width="0.9"/>
<text x="870" y="146.2" font-size="9" fill="#333" text-anchor="middle">6</text>
<circle cx="870.1" cy="196.6" r="6.7" fill="#fff" stroke="#333" stroke-width="0.9"/>
<text x="870.1" y="199.6" font-size="9" fill="#333" text-anchor="middle">5</text>
<circle cx="870.1" cy="215.3" r="6.7" fill="#fff" stroke="#333" stroke-width="0.9"/>
<text x="870.1" y="218.3" font-size="9" fill="#333" text-anchor="middle">4</text>
<circle cx="856" cy="223.8" r="6.7" fill="#fff" stroke="#333" stroke-width="0.9"/>
<text x="856" y="226.8" font-size="9" fill="#333" text-anchor="middle">3</text>
<circle cx="841.7" cy="227" r="6.7" fill="#fff" stroke="#333" stroke-width="0.9"/>
<text x="841.7" y="230.0" font-size="9" fill="#333" text-anchor="middle">2</text>
<circle cx="827.4" cy="230.4" r="6.7" fill="#fff" stroke="#333" stroke-width="0.9"/>
<text x="827.4" y="233.4" font-size="9" fill="#333" text-anchor="middle">1</text>
<text x="841.5" y="243.2" font-size="9.4" fill="#999" text-anchor="middle">Inside</text>
<text x="997.3" y="244" font-size="9.6" fill="#c4c4c4" text-anchor="end">ubakus.de</text>
<path d="M657.5 101 V231" stroke="#888" stroke-width="0.8"/>
<path d="M653.9 101 H661.4 M653.9 185.1 H661.4 M653.9 207.3 H661.4 M653.9 224 H661.4 M653.9 228.7 H661.4 M653.9 230.8 H661.4 " stroke="#888" stroke-width="0.8"/>
<text x="660.7" y="147.1" font-size="10" fill="#999">230</text>
<text x="660.7" y="200" font-size="10" fill="#999">60</text>
<text x="660.7" y="219.3" font-size="10" fill="#999">45</text>
<text transform="translate(651.8 178) rotate(-90)" font-size="9.35" fill="#999">355,3</text>
<path d="M717 252.5 H951.5 M717.1 249 V256 M731.5 249 V256 M951.5 249 V256" stroke="#888" stroke-width="0.8"/>
<text x="719.3" y="264" font-size="9.4" fill="#999">40</text>
<text x="841.3" y="264" font-size="9.75" fill="#999" text-anchor="middle">600</text>
<circle cx="658.6" cy="252.8" r="5.3" fill="none" stroke="#333" stroke-width="1.6"/>
<path d="M658.6 249.9 V255.7 M655.7 252.8 H661.5" stroke="#333" stroke-width="1.3"/>
<path d="M662.5 256.7 L668 262.2" stroke="#333" stroke-width="2.6" stroke-linecap="round"/>
</svg>
<!--/DIAG-->
<div id="bot" class="a"></div>

<!--BOT-->
<div class="a" style="left:0;top:414px;width:55px;height:101px;background:#464646"></div>
<div class="a" style="left:61.2px;top:423.3px;width:0;height:0;border-left:4.45px solid transparent;border-right:4.45px solid transparent;border-top:7.4px solid #f4f4f4"></div>
<div class="a" style="left:213.9px;top:421.00px;font-size:15px;color:#f2f2f2;white-space:nowrap;">U-value:</div>
<div class="a" style="left:273.4px;top:418.24px;font-size:18px;color:#f2f2f2;white-space:nowrap;">0,429</div>
<div class="a" style="left:323px;top:428.48px;font-size:8.5px;color:#f2f2f2;white-space:nowrap;">W/(m²K)</div>
<svg class="a" style="left:363px;top:422px" width="16" height="16" viewBox="363 422 16 16"><circle cx="368.6" cy="427.6" r="3.3" fill="#c4c4c4"/><path d="M364.5 425.2 L367.3 427.8 L369.8 425.3 L367.2 422.6 Z" fill="#515151"/><path d="M369.5 428.5 L376 435" stroke="#c4c4c4" stroke-width="2.3" stroke-linecap="round"/></svg>
<div class="a" style="left:213.9px;top:444.30px;width:164.60px;height:7.6px;background:#4a4a4a;border-top:1px solid #474747;border-bottom:1px solid #606060"></div>
<div class="a" style="left:213.9px;top:444.30px;width:71.20px;height:7.6px;background:#d9a80a"></div>
<div class="a" style="left:213.9px;top:452.60px;width:164.60px;height:2.1px;background:linear-gradient(90deg,#6f9f4c 36%,#c9a214 50%,#b81c1c 70%)"></div>
<div class="a" style="left:377.50px;top:444.30px;width:1px;height:10.40px;background:#666"></div>
<div class="a" style="left:213.9px;top:458.64px;font-size:9.3px;color:#eee;white-space:nowrap;">GEG 2020/24 Bestand (no information)</div>
<div class="a" style="left:217.8px;top:471px;width:10.2px;height:10px;background:#d2d2d2"></div>
<div class="a" style="left:220.6px;top:473.6px;width:0;height:0;border-left:2.6px solid transparent;border-right:2.6px solid transparent;border-top:5px solid #3a3a3a"></div>
<div class="a" style="left:213.9px;top:491.34px;font-size:9.3px;color:#eee;white-space:nowrap;">Contribution to the greenhouse effect:</div>
<div class="a" style="left:213.9px;top:503.30px;width:164.60px;height:4.4px;background:#4a4a4a;border-top:1px solid #474747;border-bottom:1px solid #606060"></div>
<div class="a" style="left:213.9px;top:503.30px;width:164.60px;height:4.4px;background:linear-gradient(#d84040 0,#cc0000 25%,#cc0000)"></div>
<div class="a" style="left:213.9px;top:508.80px;width:164.60px;height:1.8px;background:linear-gradient(90deg,#6f9f4c 30%,#c9a214 50%,#b81c1c 75%)"></div>
<div class="a" style="left:377.50px;top:503.30px;width:1px;height:7.30px;background:#666"></div>
<div class="a" style="left:393.7px;top:422.04px;font-size:9.3px;color:#eee;white-space:nowrap;">Condensate: 0,019 kg/m²</div>
<div class="a" style="left:393.7px;top:433.50px;width:164.60px;height:4.6px;background:#4a4a4a;border-top:1px solid #474747;border-bottom:1px solid #606060"></div>
<div class="a" style="left:393.7px;top:433.50px;width:3.30px;height:4.6px;background:linear-gradient(#8fd763,#74c24a)"></div>
<div class="a" style="left:393.7px;top:439.60px;width:164.60px;height:1.5px;background:linear-gradient(90deg,#6f9f4c 50%,#c9a214 70%,#b81c1c 92%)"></div>
<div class="a" style="left:557.30px;top:433.50px;width:1px;height:7.60px;background:#666"></div>
<div class="a" style="left:393.7px;top:450.14px;font-size:9.3px;color:#eee;white-space:nowrap;">moisture content of wood: +0,0 %</div>
<div class="a" style="left:393.7px;top:461.60px;width:164.60px;height:4.6px;background:#4a4a4a;border-top:1px solid #474747;border-bottom:1px solid #606060"></div>
<div class="a" style="left:393.7px;top:461.60px;width:1.30px;height:4.6px;background:linear-gradient(#8fd763,#74c24a)"></div>
<div class="a" style="left:393.7px;top:467.60px;width:164.60px;height:1.5px;background:linear-gradient(90deg,#6f9f4c 24%,#c9a214 33%,#b81c1c 52%)"></div>
<div class="a" style="left:557.30px;top:461.60px;width:1px;height:7.50px;background:#666"></div>
<div class="a" style="left:393.7px;top:478.44px;font-size:9.3px;color:#eee;white-space:nowrap;">Drying time: 5 Days</div>
<div class="a" style="left:393.7px;top:489.90px;width:164.60px;height:4.6px;background:#4a4a4a;border-top:1px solid #474747;border-bottom:1px solid #606060"></div>
<div class="a" style="left:393.7px;top:489.90px;width:8.30px;height:4.6px;background:linear-gradient(#8fd763,#74c24a)"></div>
<div class="a" style="left:393.7px;top:495.70px;width:164.60px;height:1.5px;background:linear-gradient(90deg,#6f9f4c 44%,#c9a214 62%,#b81c1c 88%)"></div>
<div class="a" style="left:557.30px;top:489.90px;width:1px;height:7.30px;background:#666"></div>
<div class="a" style="left:393.7px;top:502.57px;font-size:8.4px;color:#aaa;white-space:nowrap;">excellent</div>
<div class="a" style="left:258.29999999999995px;width:300px;text-align:right;top:502.57px;font-size:8.4px;color:#aaa;white-space:nowrap">insufficient</div>
<div class="a" style="left:572.9px;top:421.94px;font-size:9.3px;color:#eee;white-space:nowrap;">sd-value: 7,7 m</div>
<div class="a" style="left:438.29999999999995px;width:300px;text-align:right;top:422.04px;font-size:9.3px;color:#eee;white-space:nowrap">Thickness: 35,525 cm</div>
<div class="a" style="left:438.29999999999995px;width:300px;text-align:right;top:434.04px;font-size:9.3px;color:#eee;white-space:nowrap">Weight: 412 kg/m²</div>
<div class="a" style="left:572.9px;top:448.74px;font-size:9.3px;color:#eee;white-space:nowrap;">Interior surface: 18,8°C (54%)</div>
<div class="a" style="left:572.9px;top:460.70px;width:165.40px;height:4.6px;background:#4a4a4a;border-top:1px solid #474747;border-bottom:1px solid #606060"></div>
<div class="a" style="left:572.9px;top:460.70px;width:75.80px;height:4.6px;background:linear-gradient(#8fd763,#74c24a)"></div>
<div class="a" style="left:572.9px;top:466.60px;width:165.40px;height:1.7px;background:linear-gradient(90deg,#b81c1c 18%,#c9a214 35%,#6f9f4c 52%)"></div>
<div class="a" style="left:737.30px;top:460.70px;width:1px;height:7.60px;background:#666"></div>
<div class="a" style="left:572.9px;top:476.74px;font-size:9.3px;color:#eee;white-space:nowrap;">Drying reserve: 382 g/m²a</div>
<div class="a" style="left:572.9px;top:488.90px;width:165.40px;height:4.6px;background:#4a4a4a;border-top:1px solid #474747;border-bottom:1px solid #606060"></div>
<div class="a" style="left:572.9px;top:488.90px;width:165.40px;height:4.6px;background:linear-gradient(#8fd763,#74c24a)"></div>
<div class="a" style="left:572.9px;top:494.70px;width:165.40px;height:1.7px;background:linear-gradient(90deg,#b81c1c 48%,#c9a214 62%,#6f9f4c 76%)"></div>
<div class="a" style="left:737.30px;top:488.90px;width:1px;height:7.50px;background:#666"></div>
<div class="a" style="left:572.9px;top:501.47px;font-size:8.4px;color:#aaa;white-space:nowrap;">insufficient</div>
<div class="a" style="left:438.29999999999995px;width:300px;text-align:right;top:501.47px;font-size:8.4px;color:#aaa;white-space:nowrap">excellent</div>
<div class="a" style="left:752.8px;top:421.94px;font-size:9.3px;color:#eee;white-space:nowrap;">temp. amplitude damping (1/TAV): 29,1</div>
<div class="a" style="left:752.8px;top:433.70px;width:164.80px;height:4.3px;background:#4a4a4a;border-top:1px solid #474747;border-bottom:1px solid #606060"></div>
<div class="a" style="left:752.8px;top:433.70px;width:164.80px;height:4.3px;background:linear-gradient(#8fd763,#74c24a)"></div>
<div class="a" style="left:752.8px;top:439.40px;width:164.80px;height:1.7px;background:linear-gradient(90deg,#b81c1c 6%,#c9a214 25%,#6f9f4c 45%)"></div>
<div class="a" style="left:916.60px;top:433.70px;width:1px;height:7.40px;background:#666"></div>
<div class="a" style="left:752.8px;top:449.54px;font-size:9.3px;color:#eee;white-space:nowrap;">phase shift: 16 h</div>
<div class="a" style="left:752.8px;top:461.50px;width:164.80px;height:4.4px;background:#4a4a4a;border-top:1px solid #474747;border-bottom:1px solid #606060"></div>
<div class="a" style="left:752.8px;top:461.50px;width:146.50px;height:4.4px;background:linear-gradient(#8fd763,#74c24a)"></div>
<div class="a" style="left:752.8px;top:467.10px;width:164.80px;height:1.7px;background:linear-gradient(90deg,#b81c1c 6%,#c9a214 25%,#6f9f4c 50%)"></div>
<div class="a" style="left:916.60px;top:461.50px;width:1px;height:7.30px;background:#666"></div>
<div class="a" style="left:752.8px;top:477.94px;font-size:9.3px;color:#eee;white-space:nowrap;">Heat storage capacity: 82 kJ/m²K</div>
<div class="a" style="left:752.8px;top:490.00px;width:164.80px;height:4.2px;background:#4a4a4a;border-top:1px solid #474747;border-bottom:1px solid #606060"></div>
<div class="a" style="left:752.8px;top:490.00px;width:135.00px;height:4.2px;background:linear-gradient(#8fd763,#74c24a)"></div>
<div class="a" style="left:752.8px;top:495.30px;width:164.80px;height:1.7px;background:linear-gradient(90deg,#b81c1c 4%,#c9a214 20%,#6f9f4c 45%)"></div>
<div class="a" style="left:916.60px;top:490.00px;width:1px;height:7.00px;background:#666"></div>
<div class="a" style="left:752.8px;top:501.47px;font-size:8.4px;color:#aaa;white-space:nowrap;">insufficient</div>
<div class="a" style="left:617.6px;width:300px;text-align:right;top:501.47px;font-size:8.4px;color:#aaa;white-space:nowrap">excellent</div>
<!--/BOT-->
</body></html>
